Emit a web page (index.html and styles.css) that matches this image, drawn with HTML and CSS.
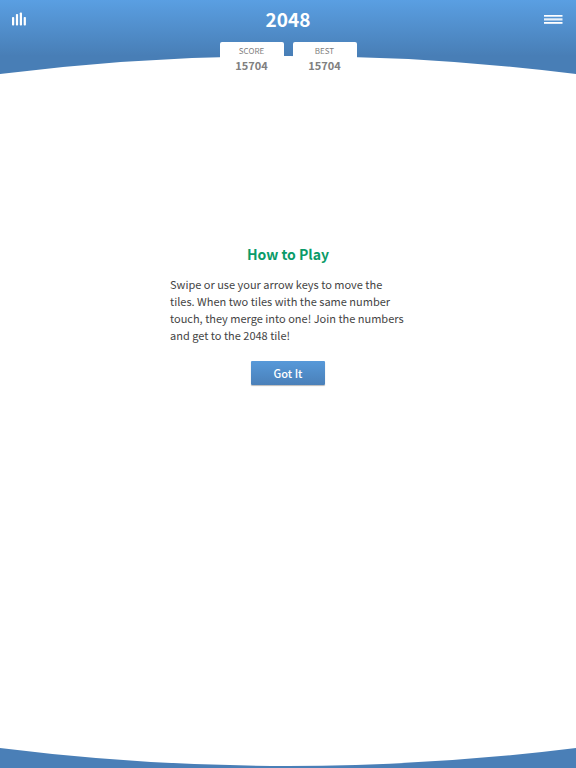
FILE: index.html
```html
<!DOCTYPE html>
<html lang="en">
<head>
<meta charset="utf-8">
<meta name="viewport" content="width=device-width, initial-scale=1">
<title>2048</title>
<link rel="stylesheet" href="styles.css">
</head>
<body>
<header class="header">
  <svg class="header-curve" viewBox="0 0 576 18" preserveAspectRatio="none" aria-hidden="true"><path d="M0 18Q288 -18 576 18Z" fill="#fff"/></svg>
  <div class="toolbar">
    <button class="icon-button" type="button" aria-label="Statistics">
      <svg width="16" height="14" viewBox="0 0 16 14" fill="#fff" aria-hidden="true"><rect x="0" y="5" width="2.2" height="8.5" rx=".8"/><rect x="3.9" y="2" width="2.2" height="11.5" rx=".8"/><rect x="7.8" y="0.5" width="2.2" height="13" rx=".8"/><rect x="11.7" y="5" width="2.2" height="8.5" rx=".8"/></svg>
    </button>
    <h1 class="title">2048</h1>
    <button class="icon-button icon-button-end" type="button" aria-label="Menu">
      <svg width="20" height="10" viewBox="0 0 20 10" fill="#fff" aria-hidden="true"><rect x="0" y="1" width="18.5" height="1.7"/><rect x="0" y="4.3" width="18.5" height="2.2" opacity=".85"/><rect x="0" y="8" width="18.5" height="1.8"/></svg>
    </button>
  </div>
  <dl class="scores">
    <div class="score"><dt>SCORE</dt><dd>15704</dd></div>
    <div class="score"><dt>BEST</dt><dd>15704</dd></div>
  </dl>
</header>
<main class="main">
  <section class="help">
    <h2 class="help-title">How to Play</h2>
    <p class="help-text">Swipe or use your arrow keys to move the tiles. When two tiles with the same number touch, they merge into one! Join the numbers and get to the 2048 tile!</p>
    <button class="confirm" type="button">Got It</button>
  </section>
</main>
<footer class="footer">
  <svg class="footer-curve" viewBox="0 0 576 20" preserveAspectRatio="none" aria-hidden="true"><path d="M0 0Q288 36 576 0V20H0Z" fill="#4a7fb7"/></svg>
</footer>
</body>
</html>
```
FILE: styles.css
```css
* {
  box-sizing: border-box;
}

body {
  margin: 0;
  min-height: 100vh;
  display: flex;
  flex-direction: column;
  background: #fff;
  color: #444;
  font-family: "Noto Sans CJK SC", "Noto Sans", sans-serif;
}

h1, h2, p, dl, dd {
  margin: 0;
}

button {
  border: 0;
  font-family: inherit;
  cursor: pointer;
}

.header {
  position: relative;
  background: linear-gradient(#5a9fe2, #487eb6 56px);
}

.header-curve {
  position: absolute;
  left: 0;
  bottom: 0;
  width: 100%;
  height: 18px;
}

.toolbar {
  display: grid;
  grid-template-columns: 1fr auto 1fr;
  align-items: center;
  height: 38px;
  padding: 0 12px;
}

.icon-button {
  display: flex;
  justify-self: start;
  padding: 0;
  background: none;
}

.icon-button-end {
  justify-self: end;
}

.title {
  color: #fff;
  font-size: 19px;
  font-weight: 700;
  line-height: 36px;
}

.scores {
  position: relative;
  display: flex;
  justify-content: center;
  gap: 9px;
  padding-top: 4px;
}

.score {
  width: 64px;
  height: 32px;
  padding-top: 2px;
  border-radius: 2px 2px 0 0;
  background: #fff;
  color: #808080;
  text-align: center;
}

.score dt {
  font-size: 8px;
  line-height: 14px;
}

.score dd {
  font-size: 11px;
  font-weight: 700;
  line-height: 14px;
}

.main {
  flex: 1;
  display: flex;
  flex-direction: column;
  padding: 168px 24px 24px;
}

.help {
  width: 100%;
  max-width: 236px;
  margin: 0 auto;
}

.help-title {
  margin-bottom: 10px;
  color: #0a9b69;
  font-size: 14px;
  font-weight: 700;
  line-height: 24px;
  text-align: center;
}

.help-text {
  font-size: 11px;
  line-height: 17px;
}

.confirm {
  display: block;
  width: 74px;
  height: 24px;
  margin: 17px auto 0;
  padding: 0;
  border-radius: 1px;
  background: linear-gradient(#5799d9, #4a80b9);
  box-shadow: 0 1px 1px #bbb;
  color: #fff;
  font-size: 11px;
  font-weight: 500;
  line-height: 24px;
}

.footer-curve {
  display: block;
  width: 100%;
  height: 20px;
}
```
